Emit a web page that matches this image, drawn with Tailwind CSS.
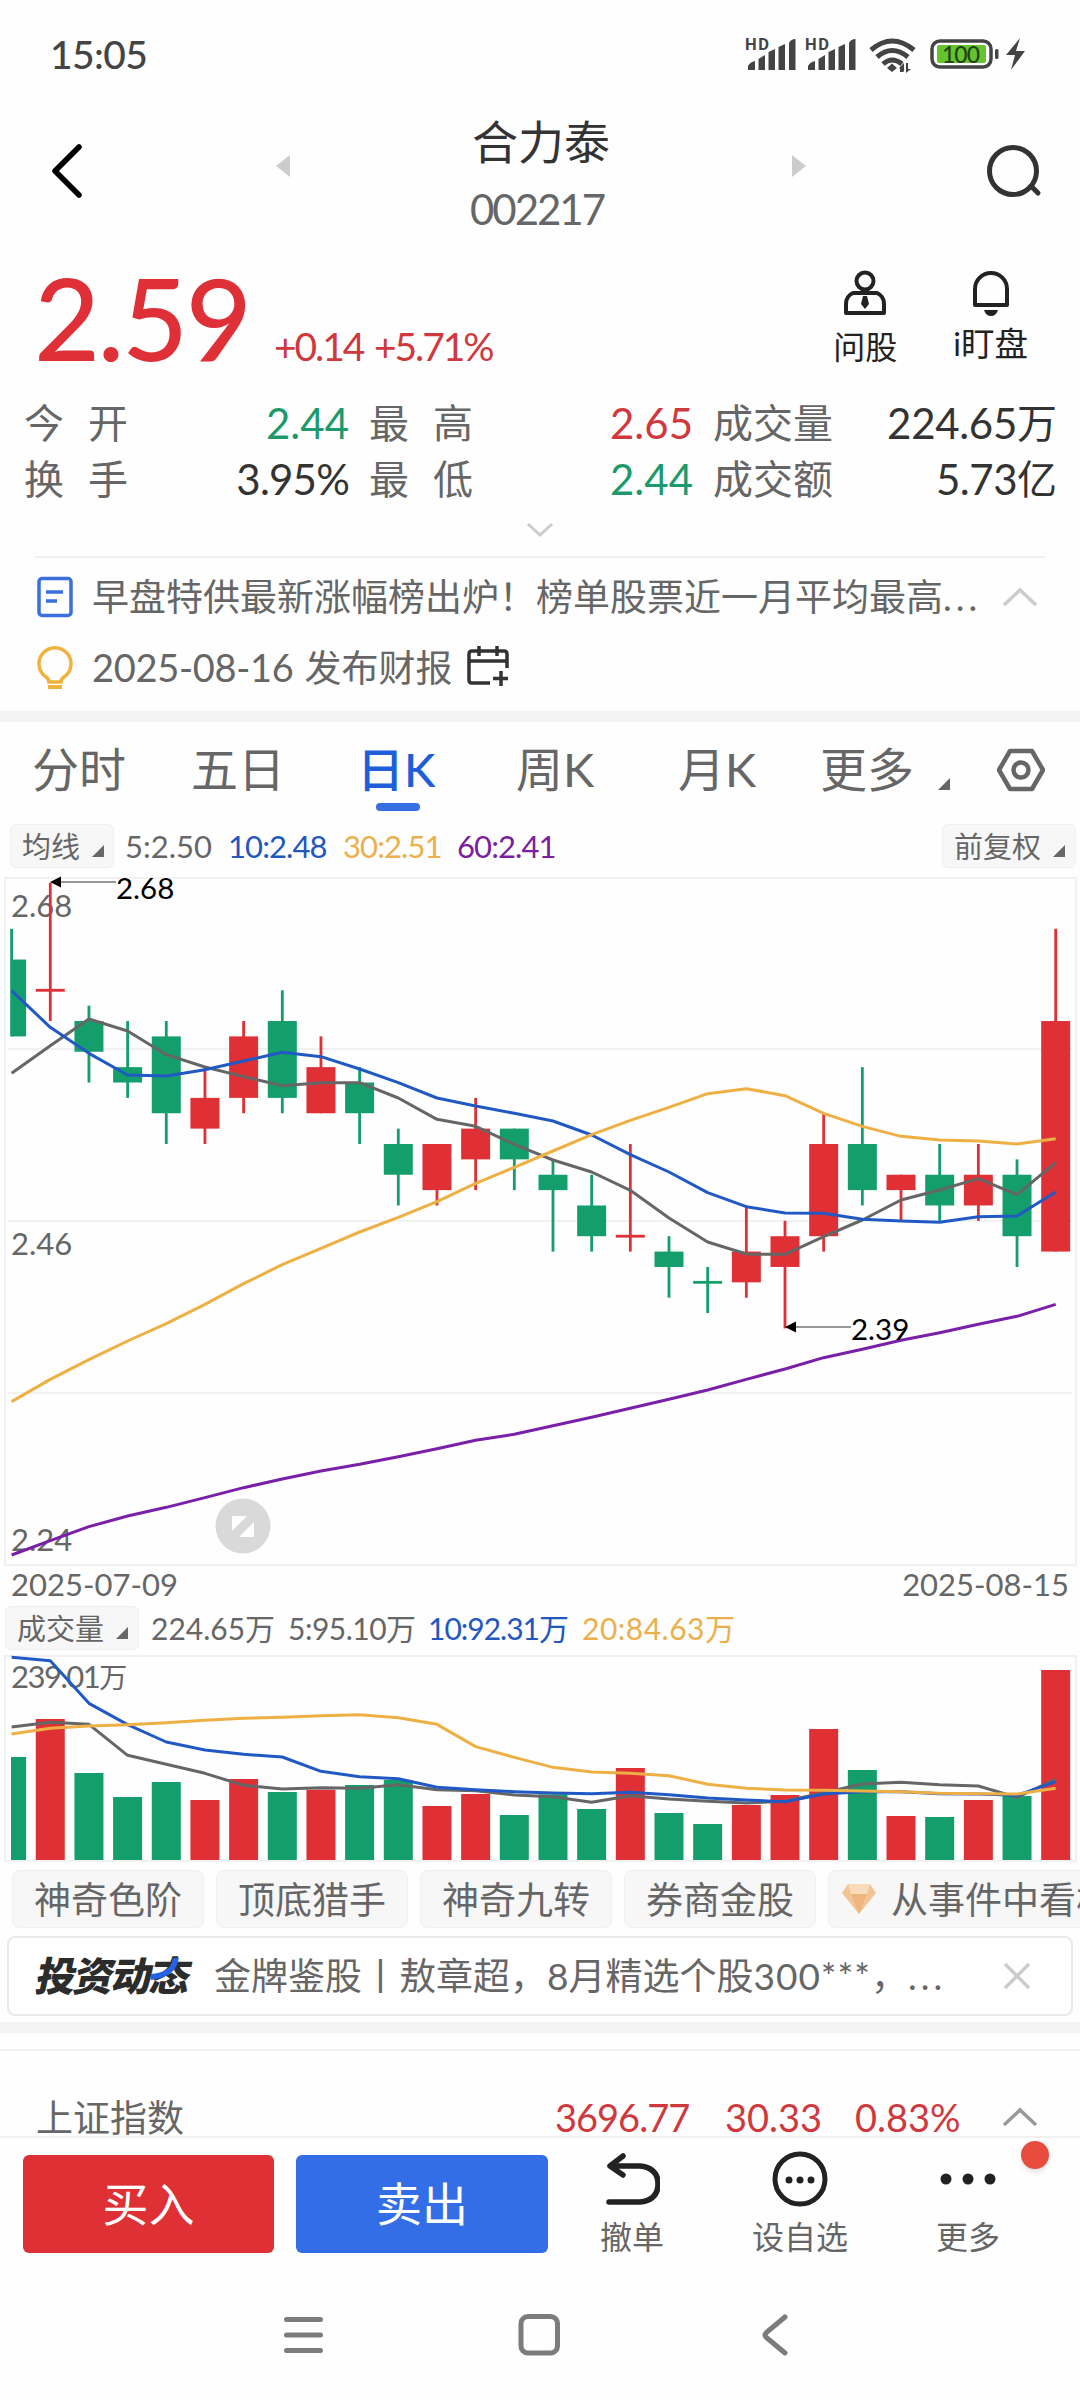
<!DOCTYPE html>
<html lang="zh-CN">

<head>
    <meta charset="UTF-8">
    <meta name="viewport" content="width=device-width, initial-scale=1.0">
    <title>合力泰 002217</title>
    <script src="https://cdn.jsdelivr.net/npm/@tailwindcss/browser@4"></script>
</head>

<body class="bg-white">
<div class="w-[1080px] h-[2400px] flex flex-col overflow-hidden bg-[#fefefe] font-['Lato','Noto_Sans_CJK_SC',sans-serif] text-[#666] leading-none whitespace-nowrap">

    <!-- Status bar -->
    <div class="h-[108px] shrink-0 flex items-center justify-between pl-[50px] pr-[54px] text-[#444]">
        <span class="text-[39px] tracking-[-0.600px] font-medium">15:05</span>
        <svg class="w-[282px] h-[40px]" viewBox="744 34 282 40" fill="#444">
            <g id="signal">
                <text x="745" y="49.500" font-size="16.500" font-weight="700" font-family="Roboto" textLength="24">HD</text>
                <path d="M748 70v-4q2-4 7-5v9zM758.500 70V59l6.500-4v15zM768.500 70V52l6.500-3v21zM778.500 70V47l6.500-3v26zM789 70V43q2-4 6.500-4v31z"/>
            </g>
            <use href="#signal" x="60"/>
            <g fill="none" stroke="#444" stroke-width="5">
                <path d="M871 50q21-18 43 0M877 57q15-13 31 0M883 64q9-8 19 0"/>
            </g>
            <path d="M892 63.500l5 4.500-5 4-5-4zM903 64v8h-3v-4zM908 63v6h3l-5 4v-10zM899 68l5-5v9z" />
            <rect x="932" y="41" width="59" height="26" rx="8" fill="#fff" stroke="#444" stroke-width="3.500"/>
            <rect x="937" y="45" width="49" height="18" rx="2" fill="#63c52b"/>
            <text x="942" y="62.500" font-size="23" font-weight="500" textLength="38" fill="#243f16">100</text>
            <rect x="995" y="49" width="3.500" height="10" rx="1.500"/>
            <path d="M1020 38l-14 17h9l-4 15 14-19h-9z"/>
        </svg>
    </div>

    <!-- Title -->
    <div class="h-[142px] shrink-0 flex items-center justify-between pl-[47px] pr-[35px]">
        <svg class="w-[40px] h-[64px] -mt-[16px]" viewBox="0 0 40 64" fill="none" stroke="#000" stroke-width="5.500" stroke-linecap="round" stroke-linejoin="round"><path d="M32 8L8 32l24 24"/></svg>
        <div class="w-[530px] flex items-center justify-between ml-[10px] -mt-[10px]">
            <svg class="w-[14px] h-[22px] -mt-[16px]" viewBox="0 0 14 22" fill="#ccc"><path d="M14 0v22L0 11z"/></svg>
            <div class="flex flex-col items-center gap-[23px]">
                <span class="text-[46px] text-[#333]">合力泰</span>
                <span class="text-[42px] tracking-[-2px] -ml-[8px]">002217</span>
            </div>
            <svg class="w-[14px] h-[22px] -mt-[16px]" viewBox="0 0 14 22" fill="#ccc"><path d="M0 0v22l14-11z"/></svg>
        </div>
        <svg class="w-[60px] h-[60px] -mt-[16px]" viewBox="0 0 60 60" fill="none" stroke="#333" stroke-width="5" stroke-linecap="round"><circle cx="28" cy="30" r="23.500"/><path d="M47 46l6 6"/></svg>
    </div>

    <!-- Price -->
    <div class="h-[142px] shrink-0 flex justify-between pl-[34px] pr-[52px]">
        <div class="flex items-baseline -mt-[4px] text-[#de3036]">
            <span class="w-[240px] text-[114px] tracking-[-2.500px] font-medium leading-[142px]">2.59</span>
            <span class="text-[39px] tracking-[-2.100px] [word-spacing:3px] text-[#cf393d]">+0.14 +5.71%</span>
        </div>
        <div class="flex gap-[56px] text-[32px] text-[#222] pt-[20px]">
            <div class="flex flex-col items-center gap-[15px]">
                <svg class="w-[44px] h-[46px]" viewBox="0 0 44 46" fill="none" stroke="#222" stroke-width="4"><circle cx="22" cy="11" r="8.500"/><path d="M10 23h24q7 3 7 11v9H3v-9q0-8 7-11z" stroke-linejoin="round"/><path d="M20 26h4l2 8-4 5-4-5z" fill="#222" stroke="none"/></svg>
                <span>问股</span>
            </div>
            <div class="flex flex-col items-center gap-[11px]">
                <svg class="w-[44px] h-[46px]" viewBox="0 0 44 46" fill="none" stroke="#222" stroke-width="4"><path d="M6 35V19a16 16 0 0 1 32 0v16z" stroke-linejoin="round"/><path d="M15 40h14q-2 6-7 6t-7-6z" fill="#222" stroke="none"/></svg>
                <span>i<span class="text-[33.500px]">盯盘</span></span>
            </div>
        </div>
    </div>

    <!-- Quote grid -->
    <div class="h-[164px] shrink-0 flex flex-col items-center pt-[3px]">
        <div class="w-full grid grid-cols-[104px_221px_124px_220px_143px_221px] pl-[24px] text-[40px]">
            <div class="h-[56px] flex items-center justify-between"><span>今</span><span>开</span></div>
            <div class="h-[56px] flex items-center justify-end text-[42px] text-[#1c9a6b]">2.44</div>
            <div class="h-[56px] flex items-center justify-between pl-[20px]"><span>最</span><span>高</span></div>
            <div class="h-[56px] flex items-center justify-end text-[42px] text-[#cf393d]">2.65</div>
            <div class="h-[56px] flex items-center pl-[20px]">成交量</div>
            <div class="h-[56px] flex items-center justify-end text-[#333]"><span class="text-[42px] tracking-[-0.300px]">224.65</span>万</div>
            <div class="h-[56px] flex items-center justify-between"><span>换</span><span>手</span></div>
            <div class="h-[56px] flex items-center justify-end text-[42px] text-[#333] tracking-[-0.800px]">3.95%</div>
            <div class="h-[56px] flex items-center justify-between pl-[20px]"><span>最</span><span>低</span></div>
            <div class="h-[56px] flex items-center justify-end text-[42px] text-[#1c9a6b]">2.44</div>
            <div class="h-[56px] flex items-center pl-[20px]">成交额</div>
            <div class="h-[56px] flex items-center justify-end text-[#333]"><span class="text-[42px] tracking-[-0.500px]">5.73</span>亿</div>
        </div>
        <svg class="w-[28px] h-[18px] mt-[14px]" viewBox="0 0 28 18" fill="none" stroke="#ccc" stroke-width="3"><path d="M2 3l12 11L26 3"/></svg>
    </div>

    <!-- News lines -->
    <div class="h-[155px] shrink-0 mx-[35px] border-t-2 border-[#f0f0f0] text-[37px]">
        <div class="h-[78px] flex items-center">
            <svg class="w-[38px] h-[42px]" viewBox="0 0 38 42" fill="none" stroke="#3a6fdd" stroke-width="3.500"><rect x="4" y="2.500" width="32" height="37" rx="3"/><path d="M11 16h17M11 25h11"/></svg>
            <span class="ml-[19px] w-[894px] overflow-hidden leading-[50px]">早盘特供最新涨幅榜出炉！榜单股票近一月平均最高<span class="tracking-[4px]">...</span></span>
            <svg class="w-[38px] h-[22px] ml-[15px]" viewBox="0 0 38 22" fill="none" stroke="#ccc" stroke-width="3.500"><path d="M3 19L19 4l16 15"/></svg>
        </div>
        <div class="h-[62px] flex items-center">
            <svg class="w-[38px] h-[46px] mt-[2px]" viewBox="0 0 38 46" fill="none" stroke="#f0b23c" stroke-width="3.500"><path d="M14 37q0-3-3-5a16 16 0 1 1 18 0q-3 2-3 5z"/><path d="M13 42h14" stroke-width="4"/></svg>
            <span class="ml-[19px] text-[38px] tracking-[-0.300px]">2025-08-16</span><span class="ml-[11px]">发布财报</span>
            <svg class="w-[44px] h-[44px] ml-[13px] -mt-[2px]" viewBox="0 0 44 44" fill="none" stroke="#333" stroke-width="3.500"><path d="M24 39H6q-3 0-3-3V10q0-3 3-3h32q3 0 3 3v14M3 17h38M13 2v10M31 2v10M35 27v15M27 34.500h15"/></svg>
        </div>
    </div>

    <div class="h-[11px] shrink-0 bg-[#f4f4f4]"></div>

    <!-- Period tabs -->
    <div class="h-[100px] shrink-0 flex items-center text-[47px] pl-[32px]">
        <span class="w-[159px] -mt-[6px]">分时</span>
        <span class="w-[166px] -mt-[6px]">五日</span>
        <span class="w-[159px] -mt-[6px] relative text-[#1f5edb] font-medium">日K<i class="absolute left-[19px] -bottom-[18px] w-[44px] h-[8px] rounded-[4px] bg-[#366fe2]"></i></span>
        <span class="w-[162px] -mt-[6px]">周K</span>
        <span class="w-[142px] -mt-[6px]">月K</span>
        <span class="w-[118px] -mt-[6px]">更多</span>
        <svg class="w-[12px] h-[12px] mt-[24px]" viewBox="0 0 12 12" fill="#666"><path d="M12 0v12H0z"/></svg>
        <svg class="w-[48px] h-[44px] ml-[47px] -mt-[4px]" viewBox="0 0 48 44" fill="none" stroke="#666" stroke-width="4.500" stroke-linejoin="round"><path d="M13 3h22l11 19-11 19H13L2 22z"/><circle cx="24" cy="22" r="7.500"/></svg>
    </div>

    <!-- MA legend -->
    <div class="h-[48px] shrink-0 flex items-center justify-between pl-[10px] pr-[4px] text-[31px]">
        <div class="flex items-center">
            <div class="w-[104px] h-[44px] mr-[11px] flex items-center gap-[12px] pl-[11px] bg-[#f7f7f7] border border-[#efefef] rounded-[6px] text-[29px]">均线<svg class="w-[12px] h-[12px] mt-[10px]" viewBox="0 0 12 12" fill="#666"><path d="M12 0v12H0z"/></svg></div>
            <span class="w-[103px]">5:2.50</span>
            <span class="w-[115px] text-[#2257c0] tracking-[-0.900px]">10:2.48</span>
            <span class="w-[114px] text-[#eab04c] tracking-[-0.900px]">30:2.51</span>
            <span class="text-[#7a1fa2] tracking-[-0.900px]">60:2.41</span>
        </div>
        <div class="w-[134px] h-[44px] flex items-center gap-[12px] pl-[11px] bg-[#f7f7f7] border border-[#efefef] rounded-[6px] text-[29px]">前复权<svg class="w-[12px] h-[12px] mt-[10px]" viewBox="0 0 12 12" fill="#666"><path d="M12 0v12H0z"/></svg></div>
    </div>

    <!-- K line chart -->
    <svg class="w-[1080px] h-[698px] shrink-0" viewBox="0 870 1080 698" font-size="31">
        <g fill="none" stroke="#f1f1f1" stroke-width="2"><rect x="5" y="878" width="1071" height="687"/><path d="M8 1049H1072M8 1221H1072M8 1393H1072"/></g>
        <g fill="#666"><text x="11" y="917">2.68</text><text x="11" y="1255">2.46</text><text x="11" y="1551">2.24</text></g>
        <g id="candles"></g>
        <g id="maLines" fill="none" stroke-width="3" stroke-linejoin="round"></g>
        <path d="M60 882H116M795 1327H851" stroke="#777" stroke-width="1.500"/>
        <path d="M50 882l11-5.500v11zM785 1327l11-5.500v11z" fill="#000"/>
        <g fill="#000" font-size="29.500"><text x="116" y="899">2.68</text><text x="851" y="1340">2.39</text></g>
        <circle cx="243" cy="1526" r="27.500" fill="#d9d9d9"/>
        <path d="M232 1516h15l-15 15zM254 1537h-15l15-15z" fill="#fff"/>
    </svg>

    <div class="h-[36px] shrink-0 flex items-center justify-between pl-[11px] pr-[11px] -mt-[2px] mb-[2px] text-[31px]">
        <span>2025-07-09</span><span>2025-08-15</span>
    </div>

    <!-- Volume legend -->
    <div class="h-[48px] shrink-0 flex items-center pl-[5px] text-[30px]">
        <div class="w-[134px] h-[44px] flex items-center gap-[12px] pl-[11px] bg-[#f7f7f7] border border-[#efefef] rounded-[6px] text-[29px]">成交量<svg class="w-[12px] h-[12px] mt-[10px]" viewBox="0 0 12 12" fill="#666"><path d="M12 0v12H0z"/></svg></div>
        <span class="ml-[12px] w-[137px]">224.65万</span>
        <span class="w-[140px] tracking-[-0.500px]">5:95.10万</span>
        <span class="w-[154px] tracking-[-1px] text-[#2257c0]">10:92.31万</span>
        <span class="text-[#eab04c] tracking-[0.500px]">20:84.63万</span>
    </div>

    <!-- Volume chart -->
    <svg class="w-[1080px] h-[212px] shrink-0" viewBox="0 1652 1080 212" font-size="31">
        <rect x="5" y="1656" width="1071" height="205" fill="none" stroke="#f1f1f1" stroke-width="2"/>
        <text x="11" y="1688" fill="#666" letter-spacing="-1.500">239.01<tspan font-size="28">万</tspan></text>
        <g id="volBars"></g>
        <g id="volLines" fill="none" stroke-width="3" stroke-linejoin="round"></g>
    </svg>

    <!-- Feature chips -->
    <div class="h-[70px] shrink-0 flex items-center gap-[12px] pl-[12px] text-[37px]">
        <div class="w-[192px] h-[58px] shrink-0 flex items-center justify-center bg-[#f7f7f7] border border-[#efefef] rounded-[8px]">神奇色阶</div>
        <div class="w-[192px] h-[58px] shrink-0 flex items-center justify-center bg-[#f7f7f7] border border-[#efefef] rounded-[8px]">顶底猎手</div>
        <div class="w-[192px] h-[58px] shrink-0 flex items-center justify-center bg-[#f7f7f7] border border-[#efefef] rounded-[8px]">神奇九转</div>
        <div class="w-[192px] h-[58px] shrink-0 flex items-center justify-center bg-[#f7f7f7] border border-[#efefef] rounded-[8px]">券商金股</div>
        <div class="w-[330px] h-[58px] shrink-0 flex items-center gap-[15px] pl-[13px] bg-[#f7f7f7] border border-[#efefef] rounded-[8px]">
            <svg class="w-[34px] h-[30px] shrink-0" viewBox="0 0 34 30"><path d="M6 0h22l6 9-17 21L0 9z" fill="#f3c596"/><path d="M9 10h16l-8 20z" fill="#efb57e"/><path d="M6 0h22l-3 10H9z" fill="#f8dcbc"/></svg>
            从事件中看板
        </div>
    </div>

    <!-- Promo -->
    <div class="h-[80px] shrink-0 mx-[7px] mt-[2px] flex items-center bg-white border-2 border-[#e9e9e9] rounded-[8px] pl-[28px] text-[37px]">
        <div class="w-[177px] flex">
            <span class="-skew-x-12 text-[40px] tracking-[-2px] font-black text-[#2c2c2c] relative">投资动态<svg class="absolute left-[112px] top-[2px] w-[30px] h-[24px]" viewBox="0 0 30 24" fill="none" stroke="#2462e6" stroke-width="6"><path d="M23 0q1 11-7 15-5 3-14 4"/></svg></span>
        </div>
        <span class="w-[740px] leading-[50px]">金牌鉴股丨敖章超，8月精选个股<span class="tracking-[1px]">300***</span>，<span class="tracking-[4px]">...</span></span>
        <svg class="w-[28px] h-[28px] ml-[49px]" viewBox="0 0 28 28" fill="none" stroke="#ccc" stroke-width="3.500"><path d="M2 2l24 24M26 2L2 26"/></svg>
    </div>

    <div class="h-[11px] shrink-0 mt-[6px] bg-[#f4f4f4]"></div>

    <!-- Index -->
    <div class="h-[89px] shrink-0 mt-[16px] flex items-center pt-[47px] pl-[36px] pr-[42px] border-y-2 border-[#f0f0f0] text-[37px]">
        <span class="flex-1">上证指数</span>
        <span class="text-[38px] w-[170px] tracking-[-1px] text-[#cf393d]">3696.77</span>
        <span class="text-[38px] w-[130px] text-[#cf393d]">30.33</span>
        <span class="text-[38px] w-[147px] text-[#cf393d]">0.83%</span>
        <svg class="w-[36px] h-[22px]" viewBox="0 0 36 22" fill="none" stroke="#999" stroke-width="3.500"><path d="M2 19L18 4l16 15"/></svg>
    </div>

    <!-- Trade bar -->
    <div class="h-[118px] shrink-0 flex pl-[23px] pt-[17px]">
        <button class="w-[251px] h-[98px] mr-[22px] rounded-[6px] bg-[#df3035] text-white text-[46px]">买入</button>
        <button class="w-[252px] h-[98px] rounded-[6px] bg-[#336ee6] text-white text-[46px]">卖出</button>
        <div class="w-[168px] flex flex-col items-center gap-[14px] text-[32px] -mt-[4px]">
            <svg class="w-[56px] h-[56px]" viewBox="0 0 56 56" fill="none" stroke="#222" stroke-width="5.500" stroke-linecap="round" stroke-linejoin="round"><path d="M19 5L6 15l13 9M7 15h29q18 2 18 18t-18 18H5"/></svg>
            <span>撤单</span>
        </div>
        <div class="w-[168px] flex flex-col items-center gap-[14px] text-[32px] -mt-[4px]">
            <svg class="w-[56px] h-[56px]" viewBox="0 0 56 56" fill="#222"><circle cx="28" cy="28" r="25" fill="none" stroke="#222" stroke-width="5"/><circle cx="17" cy="29" r="3.500"/><circle cx="28" cy="29" r="3.500"/><circle cx="39" cy="29" r="3.500"/></svg>
            <span>设自选</span>
        </div>
        <div class="w-[168px] flex flex-col items-center gap-[14px] text-[32px] -mt-[4px] relative">
            <svg class="w-[56px] h-[56px]" viewBox="0 0 56 56" fill="#222"><circle cx="6" cy="28" r="5.500"/><circle cx="28" cy="28" r="5.500"/><circle cx="50" cy="28" r="5.500"/></svg>
            <span>更多</span>
            <i class="absolute left-[137px] -top-[10px] w-[28px] h-[28px] rounded-full bg-[#e74c3c] shadow-md"></i>
        </div>
    </div>

    <!-- System navigation -->
    <div class="grow pt-[54px] flex items-start">
        <svg class="w-[1080px] h-[48px]" viewBox="0 2310 1080 48" fill="none" stroke="#7c7c7c" stroke-width="5" stroke-linecap="round" stroke-linejoin="round"><path d="M286.500 2319.500h34M286.500 2335h34M286.500 2350.500h34M785 2317l-18 15q-4 3 0 6l18 15"/><rect x="521" y="2316.500" width="36.500" height="36.500" rx="7"/></svg>
    </div>
</div>

<script>
    const STEP = 38.67, X0 = 11.6, HALF = 14.5;
    const GREEN = '#149e6b', RED = '#df3035';
    const NS = 'http://www.w3.org/2000/svg';

    function add(parent, tag, attrs) {
        const el = document.createElementNS(NS, tag);
        for (const k in attrs) el.setAttribute(k, attrs[k]);
        document.getElementById(parent).appendChild(el);
    }

    function drawLine(parent, ys, base, color) {
        const pts = ys.map((y, i) => [X0 + STEP * i, base + y / 3].join(',')).join(' ');
        add(parent, 'polyline', { points: pts, stroke: color });
    }

    // [direction, high, body top, body bottom, low], in cents below 2.68
    const candles = [
        ['g', 3, 5, 10, 10], ['r', 0, 7, 7, 9], ['g', 8, 9, 11, 13], ['g', 9, 12, 13, 14],
        ['g', 9, 10, 15, 17], ['r', 12, 14, 16, 17], ['r', 9, 10, 14, 15], ['g', 7, 9, 14, 15],
        ['r', 10, 12, 15, 15], ['g', 12, 13, 15, 17], ['g', 16, 17, 19, 21], ['r', 17, 17, 20, 21],
        ['r', 14, 16, 18, 20], ['g', 16, 16, 18, 20], ['g', 18, 19, 20, 24], ['g', 19, 21, 23, 24],
        ['r', 17, 23, 23, 24], ['g', 23, 24, 25, 27], ['g', 25, 26, 26, 28], ['r', 21, 24, 26, 27],
        ['r', 22, 23, 25, 29], ['r', 15, 17, 23, 24], ['g', 12, 17, 20, 21], ['r', 19, 19, 20, 22],
        ['g', 17, 19, 21, 22], ['r', 17, 19, 21, 22], ['g', 18, 19, 23, 25], ['r', 3, 9, 24, 24]
    ];
    const volTops = [351, 237, 399, 471, 426, 480, 417, 456, 449, 435, 420, 498, 462, 525,
        463, 507, 384, 519, 552, 495, 465, 267, 390, 528, 531, 480, 468, 90];

    candles.forEach(([dir, high, top, bottom, low], i) => {
        const y = t => 882.7 + t * 15.37;
        const x = X0 + STEP * i;
        const left = Math.max(x - HALF, 11);
        const w = x + HALF - left;
        const color = dir === 'g' ? GREEN : RED;
        add('candles', 'rect', { x: x - 1.4, y: y(high), width: 2.8, height: y(low) - y(high), fill: color });
        if (top === bottom) add('candles', 'rect', { x: left, y: y(top) - 1.4, width: w, height: 2.8, fill: color });
        else add('candles', 'rect', { x: left, y: y(top), width: w, height: y(bottom) - y(top), fill: color });
        const vt = 1640 + volTops[i] / 3;
        add('volBars', 'rect', { x: left, y: vt, width: w, height: 1860 - vt, fill: color });
    });

    drawLine('maLines', [640, 557, 477, 513, 584, 621, 650, 677, 668, 668, 714, 778, 799, 853, 900, 936, 991, 1074, 1146, 1182, 1183, 1130, 1080, 1020, 990, 956, 1004, 908], 860, '#666');
    drawLine('maLines', [392, 502, 580, 645, 648, 629, 603, 577, 590, 627, 668, 714, 738, 760, 783, 825, 884, 936, 998, 1040, 1059, 1060, 1078, 1083, 1087, 1070, 1068, 996], 860, '#2059c4');
    drawLine('maLines', [1625, 1558, 1499, 1443, 1391, 1333, 1271, 1214, 1165, 1116, 1072, 1025, 970, 922, 873, 824, 781, 742, 701, 686, 707, 760, 799, 829, 840, 843, 852, 836], 860, '#eeb044');
    drawLine('maLines', [645, 602, 560, 528, 502, 473, 443, 417, 393, 373, 350, 326, 301, 283, 257, 232, 205, 178, 150, 118, 87, 53, 28, 1, -22, -47, -71, -107], 1340, '#7a1fa8');

    drawLine('volLines', [261, 247, 253, 346, 373, 400, 436, 447, 443, 445, 434, 449, 452, 465, 470, 487, 467, 477, 484, 489, 484, 458, 432, 427, 434, 438, 472, 418], 1640, '#666');
    drawLine('volLines', [52, 62, 190, 254, 306, 330, 343, 351, 394, 410, 416, 442, 449, 455, 459, 461, 457, 464, 474, 480, 485, 462, 455, 455, 461, 462, 466, 425], 1640, '#2059c4');
    drawLine('volLines', [282, 265, 258, 254, 248, 241, 235, 232, 227, 224, 233, 253, 320, 352, 382, 396, 400, 407, 433, 445, 450, 451, 453, 455, 460, 461, 462, 445], 1640, '#eeb044');
</script>
</body>

</html>
